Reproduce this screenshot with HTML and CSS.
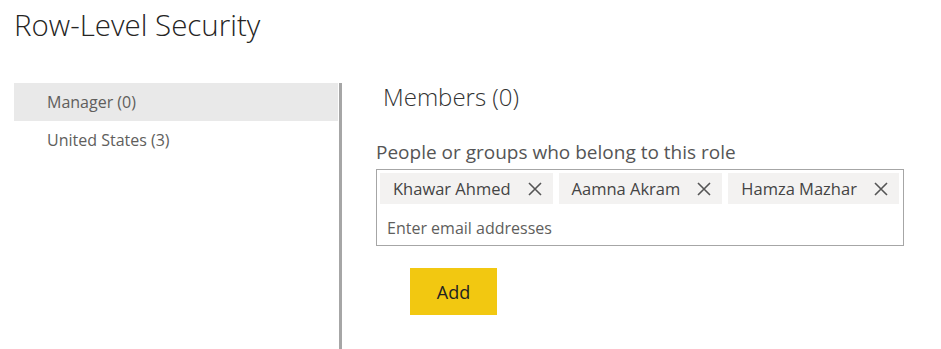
FILE: index.html
```html
<!DOCTYPE html>
<html lang="en">
<head>
    <meta charset="UTF-8">
    <meta name="viewport" content="width=device-width, initial-scale=1.0">
    <title>Row-Level Security</title>
    <link rel="stylesheet" href="styles.css">
</head>
<body>
    <h1 class="title">Row-Level Security</h1>

    <div class="layout">
        <!-- Liste des rôles -->
        <aside class="roles">
            <div class="role selected">Manager (0)</div>
            <div class="role">United States (3)</div>
        </aside>

        <main class="members">
            <h2 class="members-title">Members (0)</h2>
            <label class="members-label">People or groups who belong to this role</label>
            <div class="picker">
                <div class="chips">
                    <span class="chip">Khawar Ahmed
                        <svg class="chip-x" viewBox="0 0 14 14"><path d="M1 1L13 13M13 1L1 13"/></svg>
                    </span>
                    <span class="chip">Aamna Akram
                        <svg class="chip-x" viewBox="0 0 14 14"><path d="M1 1L13 13M13 1L1 13"/></svg>
                    </span>
                    <span class="chip">Hamza Mazhar
                        <svg class="chip-x" viewBox="0 0 14 14"><path d="M1 1L13 13M13 1L1 13"/></svg>
                    </span>
                </div>
                <input type="text" class="picker-input" placeholder="Enter email addresses">
            </div>
            <button class="add-button">Add</button>
        </main>
    </div>
</body>
</html>
```

FILE: styles.css
```css
* {
    margin: 0;
    padding: 0;
    box-sizing: border-box;
}

body {
    font-family: "Open Sans", "Noto Sans", sans-serif;
    background: #ffffff;
    color: #333333;
    width: 941px;
    height: 349px;
    overflow: hidden;
}

.title {
    font-size: 29.5px;
    font-weight: 300;
    color: #252423;
    padding: 4px 0 0 14px;
    height: 83px;
}

.layout {
    display: flex;
    height: 266px;
}

/* Liste des rôles */
.roles {
    width: 328px;
    margin-left: 14px;
    border-right: 3px solid #a6a6a6;
}

.role {
    height: 38px;
    line-height: 38px;
    padding-left: 33px;
    font-size: 16px;
    color: #605e5c;
}

.role.selected {
    background: #e9e9e9;
    margin-right: 1px;
}

.members {
    padding-left: 34px;
}

.members-title {
    font-size: 24px;
    font-weight: 300;
    color: #333333;
    margin: 0 0 0 7px;
    line-height: 28px;
}

.members-label {
    display: block;
    font-size: 19px;
    color: #555555;
    margin-top: 28px;
    line-height: 26px;
}

.picker {
    width: 528px;
    border: 1px solid #a6a6a6;
    margin-top: 4px;
    padding: 3px 2px 0 3px;
}

.chips {
    display: flex;
    gap: 6px;
}

.chip {
    display: flex;
    flex: none;
    align-items: center;
    white-space: nowrap;
    height: 31px;
    background: #f3f2f1;
    padding: 0 11px 0 13px;
    font-size: 16.5px;
    color: #444444;
    gap: 17px;
}

.chip-x {
    width: 14px;
    height: 14px;
    stroke: #555555;
    stroke-width: 1.6;
    fill: none;
}

.picker-input {
    display: block;
    width: 100%;
    height: 41px;
    border: none;
    outline: none;
    font-family: inherit;
    font-size: 16px;
    padding: 6px 0 0 7px;
    color: #333333;
}

.picker-input::placeholder {
    color: #605e5c;
}

.add-button {
    display: block;
    width: 87px;
    height: 47px;
    margin: 22px 0 0 34px;
    border: none;
    background: #f2c811;
    color: #222222;
    font-family: inherit;
    font-size: 18px;
}
```
